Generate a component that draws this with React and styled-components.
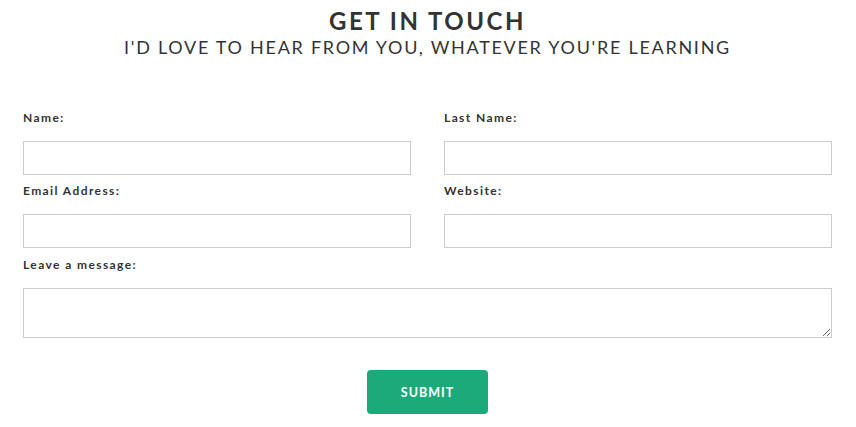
import React from "react";
import styled, { createGlobalStyle } from "styled-components";

const GlobalStyle = createGlobalStyle`
  body {
    margin: 0;
    background: #fff;
    font-family: "Lato", "Liberation Sans", sans-serif;
    color: #333;
  }
`;

const Page = styled.div`
  width: 856px;
  padding: 6px 24px 0 23px;
  box-sizing: border-box;
`;

const Header = styled.header`
  text-align: center;
`;

const Title = styled.h1`
  margin: 0;
  font-size: 24px;
  line-height: 30px;
  font-weight: 700;
  letter-spacing: 2.5px;
  color: #333;
`;

const Subtitle = styled.h2`
  margin: 0;
  font-size: 18px;
  line-height: 22px;
  font-weight: 400;
  letter-spacing: 1.72px;
  color: #333;
`;

const Form = styled.form`
  margin-top: 52px;
  display: grid;
  grid-template-columns: 1fr 1fr;
  column-gap: 33px;
  row-gap: 8px;
`;

const Field = styled.div`
  display: flex;
  flex-direction: column;
  grid-column: ${(p) => (p.$wide ? "1 / -1" : "auto")};
  margin-top: ${(p) => (p.$wide ? "1px" : "0")};
`;

const Label = styled.label`
  font-size: 12px;
  line-height: 16px;
  font-weight: 700;
  letter-spacing: 1.4px;
  color: #333;
  margin-bottom: 15px;
`;

const Input = styled.input`
  height: 34px;
  box-sizing: border-box;
  border: 1px solid #ccc;
  border-radius: 0;
  padding: 0 8px;
  font: inherit;
  outline: none;
`;

const TextArea = styled.textarea`
  height: 50px;
  box-sizing: border-box;
  border: 1px solid #ccc;
  border-radius: 0;
  padding: 6px 8px;
  font: inherit;
  outline: none;
  resize: vertical;
`;

const Actions = styled.div`
  grid-column: 1 / -1;
  display: flex;
  justify-content: center;
  margin-top: 24px;
`;

const SubmitButton = styled.button`
  width: 121px;
  height: 44px;
  border: none;
  border-radius: 4px;
  background: #1bab7b;
  color: #fff;
  font-family: "Lato", "Liberation Sans", sans-serif;
  font-size: 12.5px;
  font-weight: 700;
  letter-spacing: 1px;
  cursor: pointer;
`;

const fields = [
  { id: "name", label: "Name:" },
  { id: "last-name", label: "Last Name:" },
  { id: "email", label: "Email Address:" },
  { id: "website", label: "Website:" },
];

export default function App() {
  return (
    <>
      <GlobalStyle />
      <Page>
        <Header>
          <Title>GET IN TOUCH</Title>
          <Subtitle>I'D LOVE TO HEAR FROM YOU, WHATEVER YOU'RE LEARNING</Subtitle>
        </Header>
        <Form onSubmit={(e) => e.preventDefault()}>
          {fields.map((f) => (
            <Field key={f.id}>
              <Label htmlFor={f.id}>{f.label}</Label>
              <Input id={f.id} type="text" />
            </Field>
          ))}
          <Field $wide>
            <Label htmlFor="message">Leave a message:</Label>
            <TextArea id="message" />
          </Field>
          <Actions>
            <SubmitButton type="submit">SUBMIT</SubmitButton>
          </Actions>
        </Form>
      </Page>
    </>
  );
}
